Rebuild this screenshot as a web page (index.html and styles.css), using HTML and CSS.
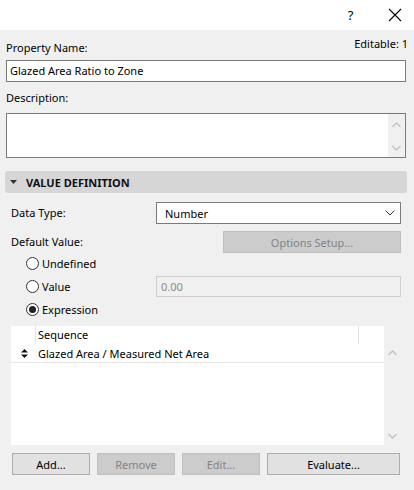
FILE: index.html
```html
<!DOCTYPE html>
<html>
<head>
<meta charset="utf-8">
<link rel="stylesheet" href="styles.css">
</head>
<body>
<div class="titlebar">
  <span class="tb-help">?</span>
  <span class="tb-close">
    <svg width="14" height="14" viewBox="0 0 14 14"><path d="M1 1 L13 13 M13 1 L1 13" stroke="#000" stroke-width="1.1" fill="none"/></svg>
  </span>
</div>
<div class="dialog">
  <div class="name-row">
    <span class="label name-label">Property Name:</span>
    <span class="editable">Editable: 1</span>
  </div>
  <div class="textbox">Glazed Area Ratio to Zone</div>
  <div class="label desc-label">Description:</div>
  <div class="textarea">
    <div class="ta-scroll">
      <svg width="9" height="6" viewBox="0 0 9 6"><path d="M0.5 5 L4.5 1 L8.5 5" stroke="#c2c2c2" stroke-width="1.3" fill="none"/></svg>
      <svg width="9" height="6" viewBox="0 0 9 6"><path d="M0.5 1 L4.5 5 L8.5 1" stroke="#c2c2c2" stroke-width="1.3" fill="none"/></svg>
    </div>
  </div>
  <div class="section">
    <svg class="tri" width="7" height="4" viewBox="0 0 7 4"><path d="M0 0 L7 0 L3.5 4 Z" fill="#333"/></svg>
    <span>VALUE DEFINITION</span>
  </div>
  <div class="form">
    <div class="row r-type">
      <span class="label">Data Type:</span>
      <div class="select">
        <span>Number</span>
        <svg width="10" height="6" viewBox="0 0 10 6"><path d="M0.5 0.5 L5 5 L9.5 0.5" stroke="#333" stroke-width="1" fill="none"/></svg>
      </div>
    </div>
    <div class="row r-default">
      <span class="label">Default Value:</span>
      <div class="btn disabled opts">Options Setup...</div>
    </div>
    <div class="radios">
      <div class="radio-row"><span class="radio"></span><span>Undefined</span></div>
      <div class="radio-row value-row">
        <div class="radio-lab"><span class="radio"></span><span>Value</span></div>
        <div class="valbox">0.00</div>
      </div>
      <div class="radio-row"><span class="radio checked"></span><span>Expression</span></div>
    </div>
    <div class="table-wrap">
      <div class="table">
        <div class="thead">
          <div class="th th-icon"></div>
          <div class="th th-seq">Sequence</div>
          <div class="th th-end"></div>
        </div>
        <div class="tbody">
          <div class="tr">
            <span class="sort">
              <svg width="7" height="9" viewBox="0 0 7 9"><path d="M0 3.5 L3.5 0 L7 3.5 Z M0 5.5 L3.5 9 L7 5.5 Z" fill="#111"/></svg>
            </span>
            <span class="td">Glazed Area / Measured Net Area</span>
          </div>
        </div>
      </div>
      <div class="tscroll">
        <svg width="9" height="6" viewBox="0 0 9 6"><path d="M0.5 5 L4.5 1 L8.5 5" stroke="#c2c2c2" stroke-width="1.3" fill="none"/></svg>
        <svg width="9" height="6" viewBox="0 0 9 6"><path d="M0.5 1 L4.5 5 L8.5 1" stroke="#c2c2c2" stroke-width="1.3" fill="none"/></svg>
      </div>
    </div>
    <div class="buttons">
      <div class="btn b-add">Add...</div>
      <div class="btn disabled b-rem">Remove</div>
      <div class="btn disabled b-edit">Edit...</div>
      <div class="btn b-eval">Evaluate...</div>
    </div>
  </div>
</div>
</body>
</html>
```
FILE: styles.css
```css
* { box-sizing: border-box; }
html, body { margin: 0; padding: 0; }
body {
  width: 414px;
  height: 490px;
  background: #f0f0f0;
  font-family: "Noto Sans", "Open Sans", sans-serif;
  font-size: 11px;
  color: #000;
  overflow: hidden;
}
.titlebar {
  height: 30px;
  background: #fff;
  display: flex;
  align-items: center;
  justify-content: flex-end;
}
.tb-help {
  width: 45px;
  text-align: center;
  font-size: 13px;
  margin-right: 3px;
}
.tb-close {
  width: 38px;
  display: flex;
  justify-content: center;
  align-items: center;
}
.dialog { padding: 0 8px 0 6px; }
.label { line-height: 16px; }
.name-row {
  display: flex;
  justify-content: space-between;
  height: 29px;
  padding-top: 6px;
}
.name-label { margin-top: 4px; }
.editable { line-height: 16px; margin-right: -2px; }
.textbox {
  height: 22px;
  width: 400px;
  background: #fff;
  border: 1px solid #7a7a7a;
  padding-left: 3px;
  line-height: 20px;
  margin-top: 1px;
}
.desc-label { margin-top: 8px; height: 23px; }
.textarea {
  height: 45px;
  width: 400px;
  background: #fff;
  border: 1px solid #7a7a7a;
  display: flex;
  justify-content: flex-end;
}
.ta-scroll {
  width: 17px;
  height: 100%;
  background: #f0f0f0;
  display: flex;
  flex-direction: column;
  justify-content: space-between;
  align-items: center;
  padding: 8px 0 6px;
}
.section {
  margin: 13px 0 0 -1px;
  width: 402px;
  height: 22px;
  background: #d6d6d6;
  border-radius: 3px;
  display: flex;
  align-items: center;
  font-weight: bold;
  color: #111;
}
.section .tri { margin: 0 9px 0 5px; }
.form { padding-left: 5px; }
.row {
  display: flex;
  align-items: center;
  justify-content: space-between;
  width: 390px;
}
.r-type { margin-top: 9px; height: 22px; }
.select {
  width: 245px;
  height: 22px;
  background: #fff;
  border: 1px solid #7a7a7a;
  display: flex;
  align-items: center;
  justify-content: space-between;
  padding: 0 5px 0 8px;
}
.r-default { margin-top: 7px; height: 22px; }
.btn {
  height: 22px;
  border: 1px solid #adadad;
  background: #e1e1e1;
  display: flex;
  align-items: center;
  justify-content: center;
}
.btn.disabled {
  background: #cccccc;
  border-color: #bfbfbf;
  color: #838383;
}
.opts { width: 178px; }
.radios { margin-top: -1px; padding-left: 15px; }
.radio-row {
  display: flex;
  align-items: center;
  height: 23px;
}
.radio-lab { display: flex; align-items: center; width: 130px; }
.radio {
  width: 13px;
  height: 13px;
  border: 1px solid #333;
  border-radius: 50%;
  background: #fff;
  margin-right: 3px;
  display: flex;
  align-items: center;
  justify-content: center;
}
.radio.checked::after {
  content: "";
  width: 7px;
  height: 7px;
  border-radius: 50%;
  background: #222;
}
.valbox {
  width: 245px;
  height: 21px;
  border: 1px solid #cfcfcf;
  background: #f0f0f0;
  color: #8a8a8a;
  padding-left: 4px;
  line-height: 19px;
}
.table-wrap {
  margin-top: 5px;
  display: flex;
  width: 390px;
}
.table { width: 373px; }
.thead {
  display: flex;
  height: 18px;
  background: #fff;
}
.th { height: 100%; line-height: 17px; }
.th-icon { width: 25px; border-right: 1px solid #e3e3e3; }
.th-seq { width: 323px; border-right: 1px solid #e3e3e3; padding-left: 2px; }
.th-end { flex: 1; }
.tbody {
  height: 101px;
  background: #fff;
}
.tr {
  display: flex;
  align-items: center;
  height: 19px;
  border-bottom: 1px solid #e6e6e6;
}
.sort { width: 26px; display: flex; justify-content: center; padding-left: 0; }
.td { padding-left: 1px; }
.tscroll {
  flex: 1;
  display: flex;
  flex-direction: column;
  justify-content: space-between;
  align-items: center;
  padding: 24px 0 6px 0;
  margin-top: 0;
}
.buttons {
  display: flex;
  gap: 7px;
  margin-top: 8px;
  padding-left: 1px;
}
.b-add, .b-rem, .b-edit { width: 78px; }
.b-eval { width: 133px; }
```
